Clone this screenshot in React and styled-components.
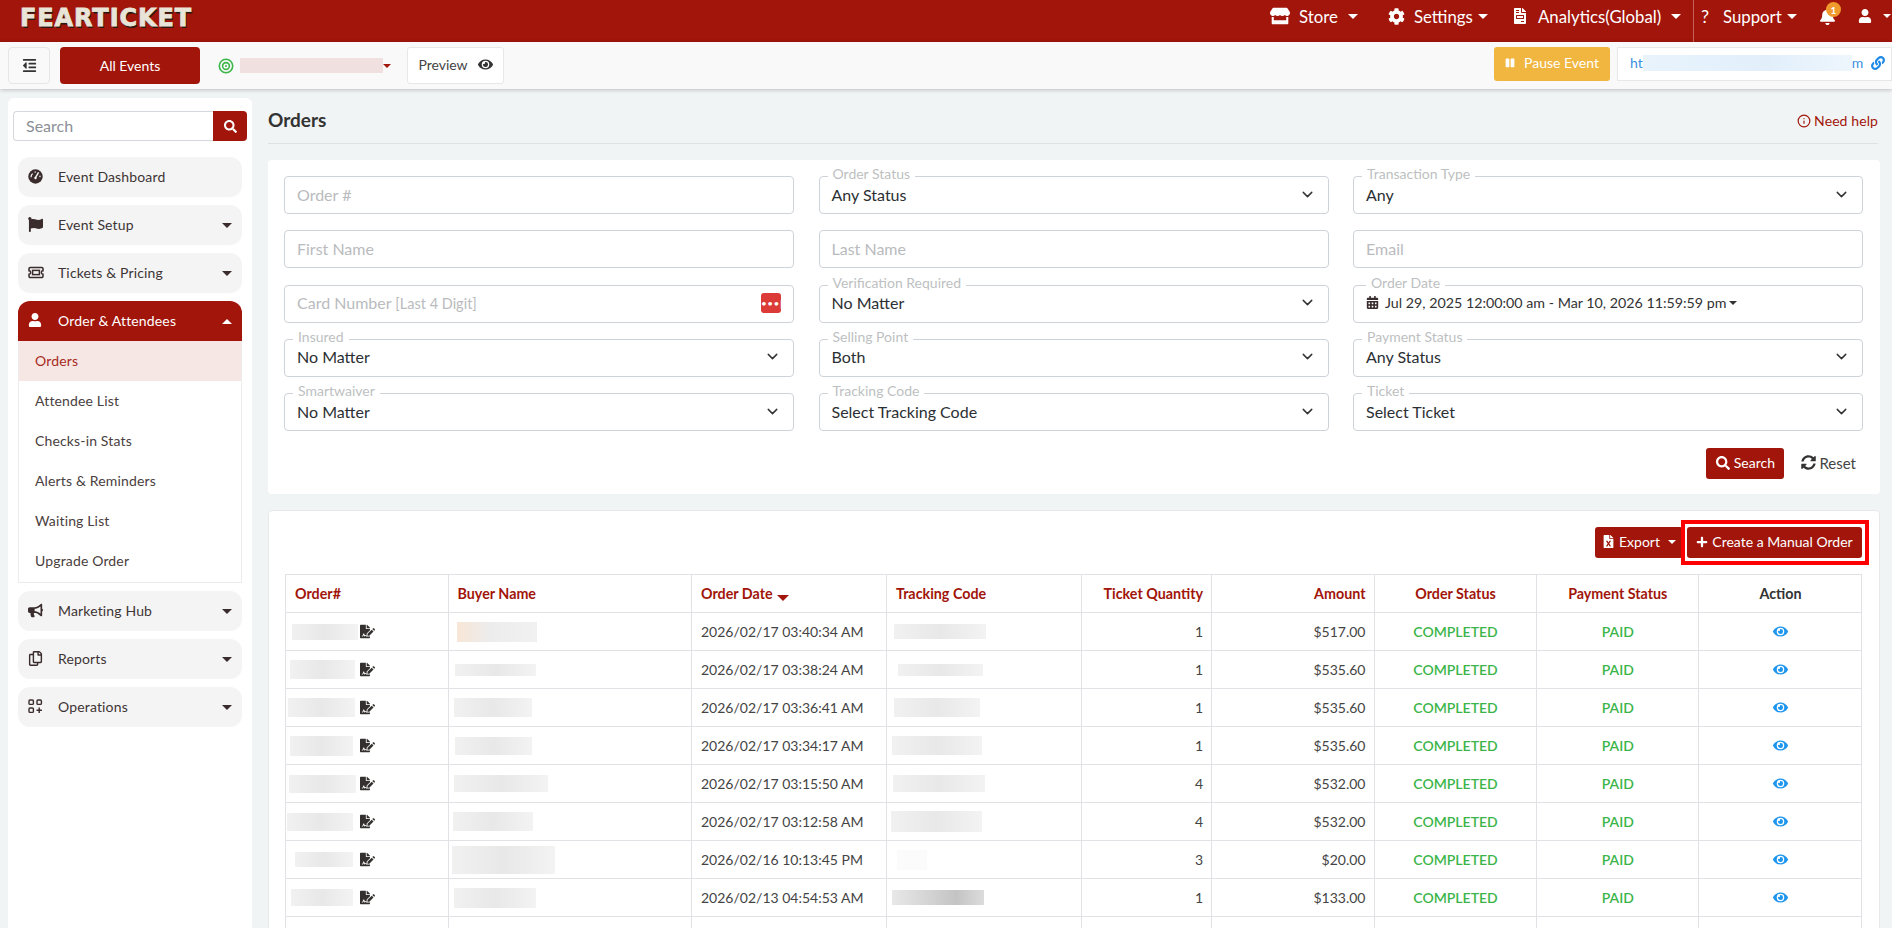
import React from "react";
import styled, { createGlobalStyle } from "styled-components";
import {
  FaStore, FaCog, FaFileInvoice, FaBell, FaUser, FaEye, FaSearch,
  FaFlag, FaBullhorn, FaRegCopy, FaCalendarAlt, FaSyncAlt,
  FaPause, FaLink, FaFileExcel, FaPlus, FaOutdent, FaFileSignature,
} from "react-icons/fa";
import { ChevronDown, Info } from "lucide-react";

const RED = "#a1150a";
const FONT = `"Lato", "Noto Sans", sans-serif`;

const Global = createGlobalStyle`
  html, body { margin: 0; padding: 0; height: 928px; overflow: hidden; background: #f1f4f5; }
  body { font-family: ${FONT}; font-size: 14px; color: #333; }
  * { box-sizing: border-box; }
`;

const Page = styled.div`
  display: flex;
  flex-direction: column;
  height: 928px;
  overflow: hidden;
`;

const Header = styled.header`
  height: 42px;
  flex: none;
  background: ${RED};
  display: flex;
  align-items: stretch;
  justify-content: space-between;
  color: #fff;
`;

const Logo = styled.div`
  margin: 6px 0 0 20px;
  width: 172px;
  height: 24px;
  font-family: "DejaVu Sans", sans-serif;
  font-weight: 700;
  font-size: 24px;
  line-height: 24px;
  letter-spacing: 0.9px;
  color: #e8e4d8;
  -webkit-text-stroke: 0.8px #e8e4d8;
  text-shadow: 1px 2px 0 #2c1a12;
  white-space: nowrap;
`;

const Nav = styled.nav`
  display: flex;
  align-items: stretch;
`;

const NavItem = styled.div`
  width: ${(p) => p.$w}px;
  display: flex;
  align-items: center;
  gap: ${(p) => p.$gap || 9}px;
  font-size: 16.8px;
  position: relative;
  padding-left: ${(p) => p.$pad || 0}px;
  padding-bottom: 10px;
  border-left: ${(p) => (p.$divider ? "1px solid #c4625a" : "none")};
  svg { flex: none; }
`;

const Glyph = styled.span`
  font-size: 18px;
  line-height: 1;
  width: 12px;
`;

const Caret = styled.span`
  display: inline-block;
  flex: none;
  width: 0;
  height: 0;
  margin-left: ${(p) => p.$ml || 0}px;
  border-left: ${(p) => p.$s || 5}px solid transparent;
  border-right: ${(p) => p.$s || 5}px solid transparent;
  border-top: ${(p) => (p.$up ? "0" : `${p.$s || 5}px solid ${p.$c || "#fff"}`)};
  border-bottom: ${(p) => (p.$up ? `${p.$s || 5}px solid ${p.$c || "#fff"}` : "0")};
`;

const Badge = styled.span`
  position: absolute;
  left: 7px;
  top: 2px;
  width: 15px;
  height: 15px;
  border-radius: 50%;
  background: #f0992c;
  color: #fff;
  font-size: 10px;
  font-weight: 700;
  display: flex;
  align-items: center;
  justify-content: center;
`;

const SubBar = styled.div`
  height: 47px;
  flex: none;
  background: #f9f9f9;
  box-shadow: 0 1px 4px rgba(0, 0, 0, 0.22);
  display: flex;
  align-items: flex-start;
  padding: 5px 0 0 8px;
  position: relative;
`;

const MenuButton = styled.button`
  width: 42px;
  height: 37px;
  border: 1px solid #e6e6e6;
  border-radius: 4px;
  background: #f9f9f9;
  color: #333;
  display: flex;
  align-items: center;
  justify-content: center;
  padding: 0;
`;

const AllEvents = styled.button`
  width: 140px;
  height: 37px;
  margin-left: 10px;
  border: 0;
  border-radius: 4px;
  background: ${RED};
  color: #fff;
  font: 14px ${FONT};
`;

const EventPick = styled.div`
  width: 207px;
  height: 37px;
  padding-left: 18px;
  display: flex;
  align-items: center;
  gap: 6px;
`;

const Blurred = styled.span`
  display: block;
  flex: none;
  width: ${(p) => p.$w}px;
  height: ${(p) => p.$h}px;
  margin-left: ${(p) => p.$x || 0}px;
  background: ${(p) => p.$bg || "linear-gradient(90deg, #f1f1f1, #e8e8e8 50%, #f3f3f3)"};
`;

const Preview = styled.div`
  width: 97px;
  height: 37px;
  padding-bottom: 3px;
  background: #fff;
  border: 1px solid #e8e8e8;
  border-radius: 3px;
  display: flex;
  align-items: center;
  justify-content: center;
  gap: 10px;
  font-size: 14px;
  color: #444;
`;

const SubRight = styled.div`
  margin-left: auto;
  display: flex;
  gap: 7px;
`;

const PauseButton = styled.button`
  width: 116px;
  height: 34px;
  padding: 0 0 3px;
  border: 0;
  border-radius: 3px;
  background: #f0b63f;
  color: #fff;
  font: 14px ${FONT};
  display: flex;
  align-items: center;
  justify-content: center;
  gap: 9px;
`;

const UrlBox = styled.div`
  width: 275px;
  height: 34px;
  background: #fff;
  border: 1px solid #e8e8e8;
  display: flex;
  align-items: center;
  padding: 0 0 3px 12px;
  color: #3b8fe0;
  font-size: 14px;
`;

const Body = styled.div`
  flex: 1;
  min-height: 0;
  display: flex;
  align-items: flex-start;
`;

const Sidebar = styled.aside`
  width: 244px;
  height: 900px;
  margin: 9px 0 0 8px;
  flex: none;
  background: #fff;
  border-radius: 6px 6px 0 0;
  padding: 13px 5px 0;
`;

const SearchRow = styled.div`
  display: flex;
  height: 30px;
  margin-bottom: 16px;
`;

const SearchInput = styled.div`
  flex: 1;
  border: 1px solid #d5d8dc;
  border-right: 0;
  border-radius: 4px 0 0 4px;
  color: #8b9097;
  font-size: 16px;
  line-height: 27px;
  padding-left: 12px;
`;

const SearchBtn = styled.div`
  width: 34px;
  background: ${RED};
  border-radius: 0 4px 4px 0;
  color: #fff;
  display: flex;
  align-items: center;
  justify-content: center;
`;

const Menu = styled.div`
  display: flex;
  flex-direction: column;
  gap: 8px;
  padding: 0 5px;
`;

const MenuItem = styled.div`
  height: 40px;
  display: flex;
  align-items: center;
  padding: 0 10px;
  border-radius: ${(p) => (p.$active ? "12px 12px 0 0" : "12px")};
  background: ${(p) => (p.$active ? RED : "#f4f4f4")};
  color: ${(p) => (p.$active ? "#fff" : "#3e3434")};
  font-size: 14px;
  letter-spacing: 0.15px;
`;

const MenuIcon = styled.span`
  width: 30px;
  flex: none;
  display: flex;
  align-items: center;
  margin-bottom: 2px;
  color: ${(p) => (p.$active ? "#fff" : "#3a2c2c")};
`;

const MenuLabel = styled.span`
  flex: 1;
  padding-bottom: 2px;
`;

const MenuGroup = styled.div`
  margin-bottom: 0;
`;

const SubMenu = styled.div`
  border: 1px solid #ececec;
  border-top: 0;
  padding-bottom: 1px;
`;

const SubItem = styled.div`
  height: 40px;
  line-height: 40px;
  padding-left: 16px;
  font-size: 14px;
  letter-spacing: 0.15px;
  background: ${(p) => (p.$active ? "#f6e6e4" : "#fff")};
  color: ${(p) => (p.$active ? "#a82c22" : "#4a4040")};
`;

const Main = styled.main`
  width: 1612px;
  margin-left: 16px;
  flex: none;
`;

const TitleRow = styled.div`
  height: 55px;
  padding-top: 18px;
  margin: 0 2px 16px 0;
  border-bottom: 1px solid #dfe2e5;
  display: flex;
  justify-content: space-between;
  align-items: flex-start;
`;

const Title = styled.h1`
  margin: 0;
  font-size: 19px;
  line-height: 26px;
  font-weight: 700;
  color: #333;
`;

const Help = styled.a`
  margin-top: 5px;
  font-size: 14px;
  letter-spacing: 0.1px;
  color: ${RED};
  display: flex;
  align-items: center;
  gap: 3px;
`;

const FilterCard = styled.section`
  height: 334px;
  background: #fff;
  border-radius: 4px;
  padding: 16px 17px 0 16px;
`;

const FilterGrid = styled.div`
  display: grid;
  grid-template-columns: repeat(3, 510px);
  grid-auto-rows: 38px;
  column-gap: 24.5px;
  row-gap: 16.25px;
`;

const Field = styled.div`
  position: relative;
  height: 38px;
  border: 1px solid #ced2d9;
  border-radius: 4px;
  display: flex;
  align-items: center;
  justify-content: space-between;
  padding: 0 12px 2px;
  font-size: 16px;
  color: ${(p) => (p.$placeholder ? "#b9bbbe" : "#2b2f33")};
`;

const FloatLabel = styled.span`
  position: absolute;
  left: ${(p) => p.$x || 8}px;
  top: -11px;
  padding: 0 5px;
  background: #fff;
  font-size: 14px;
  line-height: 16px;
  color: #bdbfc2;
`;

const Hint = styled.small`
  font-size: 14.5px;
`;

const CardKey = styled.span`
  width: 20px;
  height: 20px;
  border-radius: 3px;
  background: #db3a36;
  color: #fff;
  font-size: 10px;
  line-height: 20px;
  text-align: center;
  letter-spacing: 0.5px;
`;

const DateValue = styled.span`
  display: flex;
  align-items: center;
  gap: 6px;
  font-size: 14.25px;
  color: #333;
`;

const FilterActions = styled.div`
  display: flex;
  justify-content: flex-end;
  align-items: center;
  margin: 17px 7px 0 0;
  gap: 17px;
`;

const RedButton = styled.button`
  position: relative;
  height: 31px;
  width: ${(p) => p.$w}px;
  margin-left: ${(p) => p.$ml || 0}px;
  border: 0;
  border-radius: 3px;
  background: ${RED};
  color: #fff;
  font: 14px ${FONT};
  display: flex;
  align-items: center;
  justify-content: center;
  gap: 4px;
  padding: 0 0 2px;
`;

const Marker = styled.span`
  position: absolute;
  inset: -7px -7px -7px -6px;
  border: 4px solid #f00;
  pointer-events: none;
`;

const ResetLink = styled.span`
  display: flex;
  align-items: center;
  gap: 3px;
  padding-bottom: 2px;
  color: #444;
  font-size: 15px;
`;

const ListCard = styled.section`
  margin-top: 16px;
  background: #fff;
  border: 1px solid #e6e8ea;
  border-radius: 4px;
  padding: 16px 17px 0 16px;
  height: 430px;
`;

const Toolbar = styled.div`
  display: flex;
  justify-content: flex-end;
  margin-bottom: 16px;
`;

const Table = styled.table`
  width: 1576px;
  table-layout: fixed;
  border-collapse: collapse;
  font-size: 14px;
`;

const Th = styled.th`
  height: 38px;
  padding: 0 8px 0 9px;
  border: 1px solid #e0e2e6;
  text-align: ${(p) => p.$align || "left"};
  font-size: 14.3px;
  font-weight: 700;
  color: ${(p) => (p.$plain ? "#333" : RED)};
  white-space: nowrap;
`;

const Td = styled.td`
  height: 38px;
  padding: 0 8px 0 9px;
  border: 1px solid #e0e2e6;
  text-align: ${(p) => p.$align || "left"};
  color: ${(p) => (p.$ok ? "#3bb54a" : "#444")};
  font-weight: ${(p) => (p.$ok ? 600 : 400)};
  white-space: nowrap;
`;

const OrderCell = styled.div`
  display: flex;
  align-items: center;
  width: 100%;
`;

const OrderSlot = styled.div`
  width: 65px;
  flex: none;
`;

const EditIcon = styled(FaFileSignature)`
  color: #33302f;
`;

const ViewIcon = styled(FaEye)`
  color: #1f96ee;
  display: block;
  margin: 0 auto;
`;

const SortMark = styled.span`
  display: inline-block;
  margin: 0 0 -2px 4px;
  width: 0;
  height: 0;
  border-left: 6px solid transparent;
  border-right: 6px solid transparent;
  border-top: 6px solid ${RED};
`;

const Target = () => (
  <svg width="16" height="16" viewBox="0 0 16 16" fill="none">
    <circle cx="8" cy="8" r="6.7" stroke="#3cb54a" strokeWidth="1.6" />
    <circle cx="8" cy="8" r="3.4" stroke="#3cb54a" strokeWidth="1.6" />
    <circle cx="8" cy="8" r="1" fill="#3cb54a" />
  </svg>
);

const GaugeIcon = () => (
  <svg width="15" height="15" viewBox="0 0 15 15">
    <circle cx="7.5" cy="7.5" r="7.2" fill="currentColor" />
    <path d="M7.5 8.5L10.6 3.4" stroke="#fff" strokeWidth="1.4" fill="none" />
    <path d="M3 8.2a4.6 4.6 0 0 1 1.6-3.6M6.6 3.1l1.3-.1M11.8 6.6l.3 1.5" stroke="#fff" strokeWidth="1.2" fill="none" />
    <circle cx="7.5" cy="9" r="1.2" fill="#fff" />
  </svg>
);

const TicketIcon = () => (
  <svg width="16" height="13" viewBox="0 0 16 13" fill="none" stroke="currentColor" strokeWidth="1.5">
    <path d="M2.2 1.5h11.6a1.2 1.2 0 0 1 1.2 1.2v2.1a1.7 1.7 0 0 0 0 3.4v2.1a1.2 1.2 0 0 1-1.2 1.2H2.2A1.2 1.2 0 0 1 1 10.3V8.2a1.7 1.7 0 0 0 0-3.4V2.7a1.2 1.2 0 0 1 1.2-1.2z" />
    <rect x="4.6" y="4.4" width="6.8" height="4.2" />
  </svg>
);

const OperationsIcon = () => (
  <svg width="15" height="15" viewBox="0 0 15 15" fill="none" stroke="currentColor" strokeWidth="1.4">
    <rect x="1" y="1" width="4.4" height="4.4" rx="1" />
    <rect x="9" y="1" width="4.4" height="4.4" rx="1" />
    <rect x="1" y="9" width="4.4" height="4.4" rx="1" />
    <path d="M11.2 8.6v5.4M8.5 11.3h5.4" />
  </svg>
);

const SideItems = [
  { label: "Event Dashboard", icon: <GaugeIcon /> },
  { label: "Event Setup", icon: <FaFlag size={15} />, more: true },
  { label: "Tickets & Pricing", icon: <TicketIcon />, more: true },
];

const SideItemsAfter = [
  { label: "Marketing Hub", icon: <FaBullhorn size={15} /> },
  { label: "Reports", icon: <FaRegCopy size={15} /> },
  { label: "Operations", icon: <OperationsIcon /> },
];

const SubLinks = ["Attendee List", "Checks-in Stats", "Alerts & Reminders", "Waiting List", "Upgrade Order"];

const Chevron = () => <ChevronDown size={17} strokeWidth={2} color="#333" />;

const rows = [
  { date: "2026/02/17 03:40:34 AM", qty: 1, amount: "$517.00", o: [-3, 66, 16], b: [-1, 80, 20, "linear-gradient(90deg, #f8e6d6, #ececec 40%, #f1f1f1)"], t: [-2, 92, 15] },
  { date: "2026/02/17 03:38:24 AM", qty: 1, amount: "$535.60", o: [-5, 65, 19], b: [-3, 81, 12], t: [2, 85, 12] },
  { date: "2026/02/17 03:36:41 AM", qty: 1, amount: "$535.60", o: [-7, 67, 19], b: [-4, 78, 19], t: [-2, 86, 19] },
  { date: "2026/02/17 03:34:17 AM", qty: 1, amount: "$535.60", o: [-5, 63, 20], b: [-3, 77, 18], t: [-4, 90, 19] },
  { date: "2026/02/17 03:15:50 AM", qty: 4, amount: "$532.00", o: [-6, 67, 18], b: [-4, 94, 17], t: [-3, 92, 17] },
  { date: "2026/02/17 03:12:58 AM", qty: 4, amount: "$532.00", o: [-8, 66, 18], b: [-5, 80, 19], t: [-5, 91, 21] },
  { date: "2026/02/16 10:13:45 PM", qty: 3, amount: "$20.00", o: [0, 58, 15], b: [-6, 103, 28], t: [1, 30, 20, "#fbfbfb"] },
  { date: "2026/02/13 04:54:53 AM", qty: 1, amount: "$133.00", o: [-4, 62, 17], b: [-4, 82, 20], t: [-4, 92, 15, "linear-gradient(90deg, #e8e8e8, #c4c4c4 70%, #dcdcdc)"] },
];

const cols = [162.5, 243.5, 195, 194.5, 130.5, 162.5, 162, 162.5, 163];

const Secret = ({ v }) => <Blurred $x={v[0]} $w={v[1]} $h={v[2]} $bg={v[3]} />;

const filters = [
  { placeholder: "Order #" },
  { label: "Order Status", value: "Any Status" },
  { label: "Transaction Type", value: "Any" },
  { placeholder: "First Name" },
  { placeholder: "Last Name" },
  { placeholder: "Email" },
  { card: true },
  { label: "Verification Required", value: "No Matter" },
  { date: true },
  { label: "Insured", value: "No Matter" },
  { label: "Selling Point", value: "Both" },
  { label: "Payment Status", value: "Any Status" },
  { label: "Smartwaiver", value: "No Matter" },
  { label: "Tracking Code", value: "Select Tracking Code" },
  { label: "Ticket", value: "Select Ticket" },
];

const FilterField = ({ f }) => {
  if (f.placeholder) return <Field $placeholder>{f.placeholder}</Field>;
  if (f.card)
    return (
      <Field $placeholder>
        <span>Card Number <Hint>[Last 4 Digit]</Hint></span>
        <CardKey>•••|</CardKey>
      </Field>
    );
  if (f.date)
    return (
      <Field>
        <FloatLabel $x={12}>Order Date</FloatLabel>
        <DateValue>
          <FaCalendarAlt size={13} color="#3a2c2c" />
          Jul 29, 2025 12:00:00 am - Mar 10, 2026 11:59:59 pm
          <Caret $s={4} $c="#333" $ml={-3} />
        </DateValue>
      </Field>
    );
  return (
    <Field>
      <FloatLabel>{f.label}</FloatLabel>
      {f.value}
      <Chevron />
    </Field>
  );
};

export default function App() {
  return (
    <Page>
      <Global />
      <Header>
        <Logo>FEARTICKET</Logo>
        <Nav>
          <NavItem $w={118}><FaStore size={20} />Store<Caret $ml={1} /></NavItem>
          <NavItem $w={124}><FaCog size={17} />Settings<Caret $ml={-4} /></NavItem>
          <NavItem $w={181} $gap={10}><FaFileInvoice size={16} />Analytics(Global)<Caret /></NavItem>
          <NavItem $w={126} $divider $pad={7} $gap={10}><Glyph>?</Glyph>Support<Caret $ml={-5} /></NavItem>
          <NavItem $w={39}><FaBell size={17} /><Badge>1</Badge></NavItem>
          <NavItem $w={34} $gap={11}><FaUser size={14} /><Caret $s={4} /></NavItem>
        </Nav>
      </Header>
      <SubBar>
        <MenuButton><FaOutdent size={15} /></MenuButton>
        <AllEvents>All Events</AllEvents>
        <EventPick>
          <Target />
          <Blurred $w={143} $h={15} $bg="#f0e0e0" />
          <Caret $s={4} $c={RED} $ml={-6} />
        </EventPick>
        <Preview>Preview <FaEye size={15} color="#333" /></Preview>
        <SubRight>
          <PauseButton><FaPause size={10} />Pause Event</PauseButton>
          <UrlBox>
            ht
            <Blurred $w={209} $h={16} $bg="linear-gradient(90deg, #e8f3fc, #e2effb 60%, #eef6fd)" />
            m
            <Blurred $w={8} $h={1} $bg="transparent" />
            <FaLink size={14} color="#1e8ae6" />
          </UrlBox>
        </SubRight>
      </SubBar>
      <Body>
        <Sidebar>
          <SearchRow>
            <SearchInput>Search</SearchInput>
            <SearchBtn><FaSearch size={13} /></SearchBtn>
          </SearchRow>
          <Menu>
            {SideItems.map((it) => (
              <MenuItem key={it.label}>
                <MenuIcon>{it.icon}</MenuIcon>
                <MenuLabel>{it.label}</MenuLabel>
                {it.more && <Caret $c="#3a2c2c" />}
              </MenuItem>
            ))}
            <MenuGroup>
              <MenuItem $active>
                <MenuIcon $active><FaUser size={14} /></MenuIcon>
                <MenuLabel>Order &amp; Attendees</MenuLabel>
                <Caret $up />
              </MenuItem>
              <SubMenu>
                <SubItem $active>Orders</SubItem>
                {SubLinks.map((s) => <SubItem key={s}>{s}</SubItem>)}
              </SubMenu>
            </MenuGroup>
            {SideItemsAfter.map((it) => (
              <MenuItem key={it.label}>
                <MenuIcon>{it.icon}</MenuIcon>
                <MenuLabel>{it.label}</MenuLabel>
                <Caret $c="#3a2c2c" />
              </MenuItem>
            ))}
          </Menu>
        </Sidebar>
        <Main>
          <TitleRow>
            <Title>Orders</Title>
            <Help><Info size={14} strokeWidth={2} />Need help</Help>
          </TitleRow>
          <FilterCard>
            <FilterGrid>
              {filters.map((f, i) => <FilterField key={i} f={f} />)}
            </FilterGrid>
            <FilterActions>
              <RedButton $w={78}><FaSearch size={14} />Search</RedButton>
              <ResetLink><FaSyncAlt size={15} color="#333" />Reset</ResetLink>
            </FilterActions>
          </FilterCard>
          <ListCard>
            <Toolbar>
              <RedButton $w={88}><FaFileExcel size={13} />Export<Caret $s={4} $ml={4} /></RedButton>
              <RedButton $w={175} $ml={4}><FaPlus size={12} />Create a Manual Order<Marker /></RedButton>
            </Toolbar>
            <Table>
              <colgroup>
                {cols.map((c, i) => <col key={i} style={{ width: c }} />)}
              </colgroup>
              <thead>
                <tr>
                  <Th>Order#</Th>
                  <Th>Buyer Name</Th>
                  <Th>Order Date<SortMark /></Th>
                  <Th>Tracking Code</Th>
                  <Th $align="right">Ticket Quantity</Th>
                  <Th $align="right">Amount</Th>
                  <Th $align="center">Order Status</Th>
                  <Th $align="center">Payment Status</Th>
                  <Th $align="center" $plain>Action</Th>
                </tr>
              </thead>
              <tbody>
                {rows.map((r) => (
                  <tr key={r.date}>
                    <Td>
                      <OrderCell>
                        <OrderSlot><Secret v={r.o} /></OrderSlot>
                        <EditIcon size={15} />
                      </OrderCell>
                    </Td>
                    <Td><Secret v={r.b} /></Td>
                    <Td>{r.date}</Td>
                    <Td><Secret v={r.t} /></Td>
                    <Td $align="right">{r.qty}</Td>
                    <Td $align="right">{r.amount}</Td>
                    <Td $align="center" $ok>COMPLETED</Td>
                    <Td $align="center" $ok>PAID</Td>
                    <Td $align="center"><ViewIcon size={15} /></Td>
                  </tr>
                ))}
                <tr>
                  <Td><OrderCell><OrderSlot /><EditIcon size={15} /></OrderCell></Td>
                  <Td /><Td /><Td /><Td /><Td /><Td /><Td /><Td />
                </tr>
              </tbody>
            </Table>
          </ListCard>
        </Main>
      </Body>
    </Page>
  );
}
